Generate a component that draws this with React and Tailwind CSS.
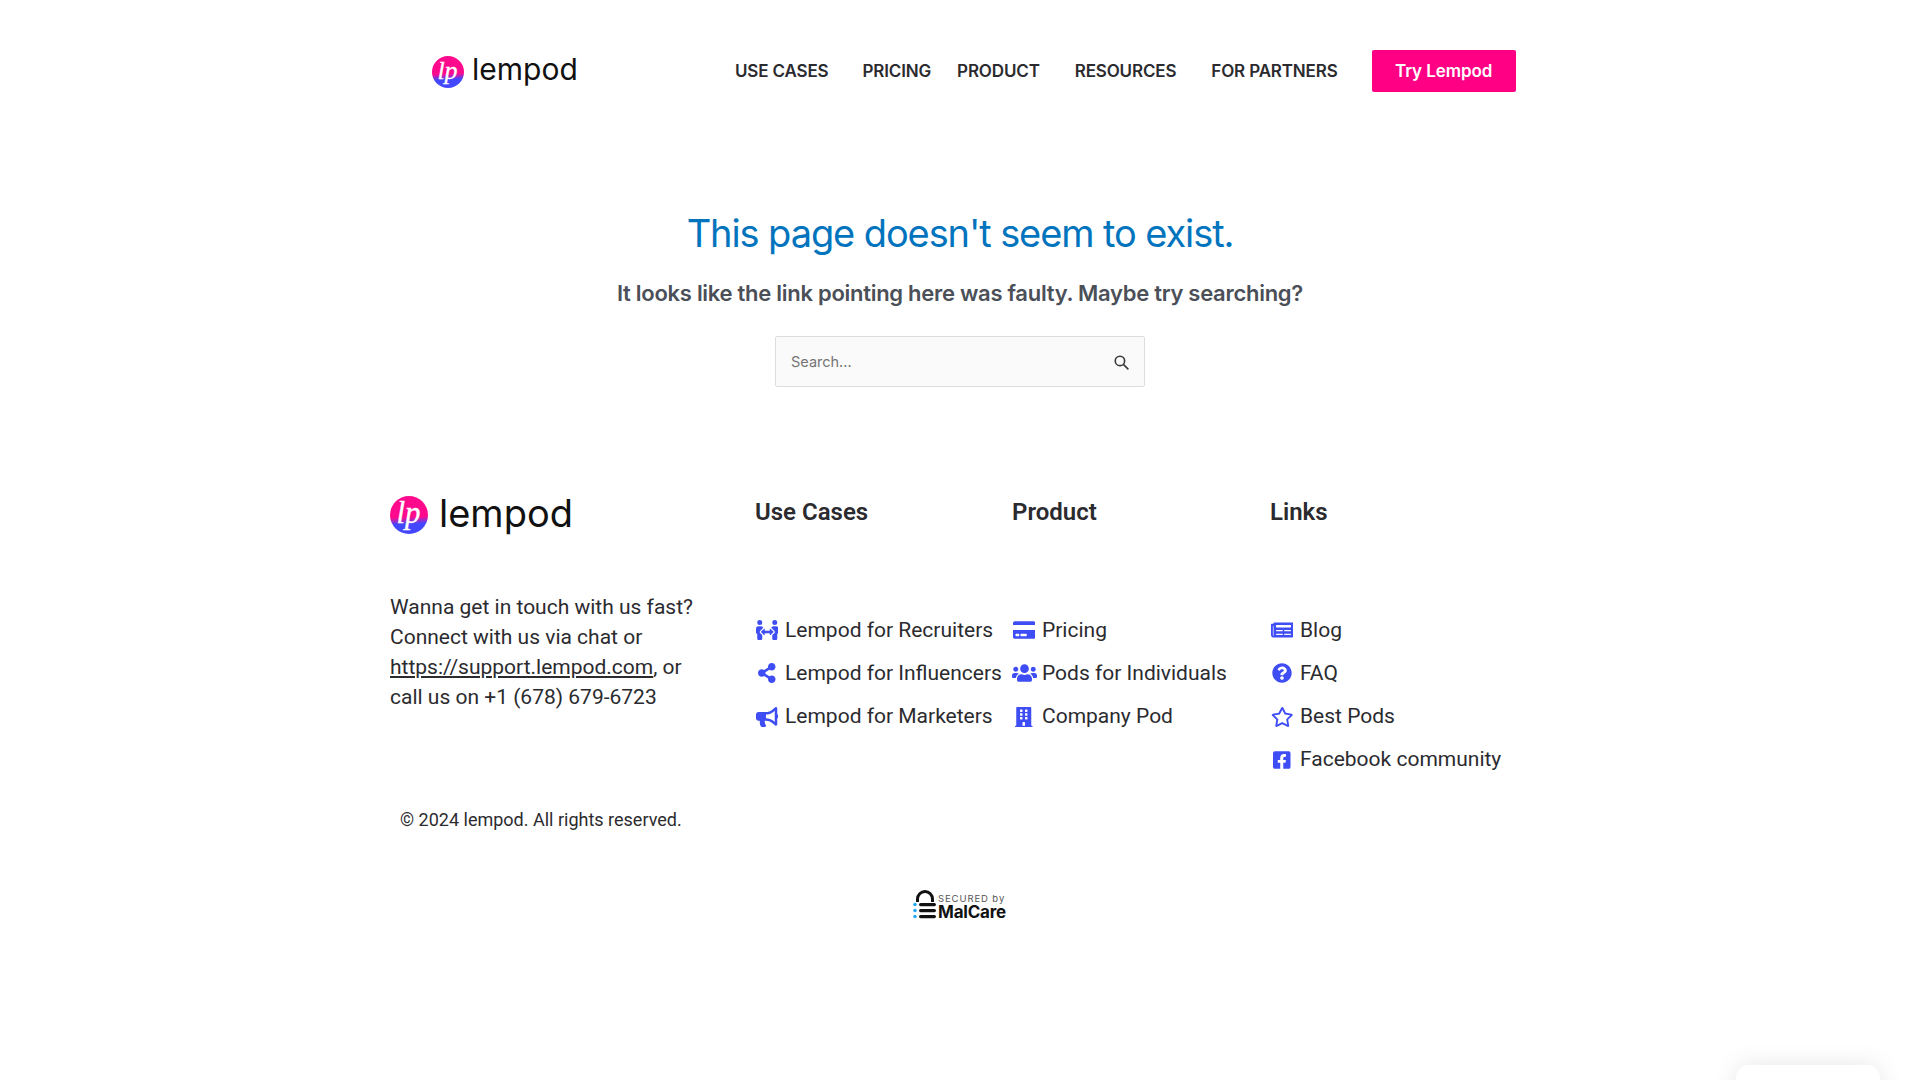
import React from "react";
import {
  FaPeopleArrows, FaShareAlt, FaBullhorn, FaCreditCard, FaUsers, FaBuilding,
  FaNewspaper, FaQuestionCircle, FaRegStar, FaFacebookSquare,
} from "react-icons/fa";

const navLinks = [
  { label: "USE CASES", className: "mr-[34px]" },
  { label: "PRICING", className: "mr-[26px]" },
  { label: "PRODUCT", className: "mr-[35px]" },
  { label: "RESOURCES", className: "mr-[35px]" },
  { label: "FOR PARTNERS", className: "mr-[34px]" },
];

const footerColumns = [
  {
    title: "Use Cases",
    width: "w-[257px]",
    items: [
      { icon: FaPeopleArrows, size: "w-[22.5px]", label: "Lempod for Recruiters" },
      { icon: FaShareAlt, size: "w-[17.5px]", label: "Lempod for Influencers" },
      { icon: FaBullhorn, size: "w-[22.5px]", label: "Lempod for Marketers" },
    ],
  },
  {
    title: "Product",
    width: "w-[258px]",
    items: [
      { icon: FaCreditCard, size: "w-[22.5px]", label: "Pricing" },
      { icon: FaUsers, size: "w-[25px]", label: "Pods for Individuals" },
      { icon: FaBuilding, size: "w-[17.5px]", label: "Company Pod" },
    ],
  },
  {
    title: "Links",
    width: "w-[250px]",
    items: [
      { icon: FaNewspaper, size: "w-[22.5px]", label: "Blog" },
      { icon: FaQuestionCircle, size: "w-[20px]", label: "FAQ" },
      { icon: FaRegStar, size: "w-[22.5px]", label: "Best Pods" },
      { icon: FaFacebookSquare, size: "w-[17.5px]", label: "Facebook community" },
    ],
  },
];

const LogoMark = ({ id, className }) => (
  <svg viewBox="0 0 32 32" className={className}>
    <defs>
      <linearGradient id={id} x1="0" y1="0" x2="0.05" y2="1">
        <stop offset="0.58" stopColor="#ff0a8c" />
        <stop offset="0.76" stopColor="#4348ff" />
      </linearGradient>
    </defs>
    <circle cx="16" cy="16" r="16" fill={`url(#${id})`} />
    <text x="15.5" y="23" textAnchor="middle" fontSize="26" fontStyle="italic" fill="#fff" stroke="#fff" strokeWidth="0.3" fontFamily="'Liberation Serif', serif">lp</text>
  </svg>
);

const MalCareBadge = () => (
  <div className="flex items-end w-[94px] h-[32px]">
    <svg viewBox="0 0 24 32" className="w-[24px] h-[32px] shrink-0">
      <path d="M4.5 13V10a7.5 7.5 0 0 1 15 0v3" fill="none" stroke="#111" strokeWidth="3" />
      <rect x="6" y="14" width="17" height="3.2" rx="1.6" fill="#111" />
      <rect x="6" y="20" width="17" height="3.2" rx="1.6" fill="#111" />
      <rect x="6" y="26" width="17" height="3.2" rx="1.6" fill="#111" />
      <circle cx="2" cy="15.5" r="1.7" fill="#1ea7f5" />
      <circle cx="2" cy="21.5" r="1.7" fill="#1ea7f5" />
      <circle cx="2" cy="27.5" r="1.7" fill="#1ea7f5" />
    </svg>
    <div className="ml-[1px] flex flex-col items-start">
      <span className="text-[9.5px] leading-[10px] tracking-[0.9px] text-[#555] whitespace-nowrap font-['Inter',sans-serif]">SECURED by</span>
      <span className="text-[17px] leading-[17px] font-bold text-[#111] whitespace-nowrap font-['Inter',sans-serif] tracking-[-0.2px]">MalCare</span>
    </div>
  </div>
);

const App = () => {
  return (
    <div className="relative h-[1080px] overflow-hidden bg-white font-['Roboto',sans-serif] text-[#2b2b2f]">
      {/* Header */}
      <header className="w-[1140px] mx-auto h-[141px] pt-[50px] flex items-start">
        <div className="ml-[42px] w-[303px] h-[42px] flex items-center">
          <LogoMark id="logo-top" className="w-[32px] h-[32px] mt-[1px]" />
          <span className="ml-[8px] text-[30px] leading-none text-[#111] font-['Inter',sans-serif] -mt-[4px]">lempod</span>
        </div>
        <nav className="h-[42px] flex items-center">
          {navLinks.map((link) => (
            <a key={link.label} href="#" className={`pt-[1px] text-[17px] font-semibold text-[#2b2b2f] whitespace-nowrap font-['Inter',sans-serif] tracking-[-0.15px] ${link.className}`}>
              {link.label}
            </a>
          ))}
          <a href="#" className="w-[144px] h-[42px] pt-[1px] flex items-center justify-center rounded-[2px] bg-[#ff0084] text-white text-[17px] font-semibold font-['Inter',sans-serif] tracking-[-0.1px]">
            Try Lempod
          </a>
        </nav>
      </header>

      {/* Not found */}
      <main className="flex flex-col items-center font-['Inter',sans-serif]">
        <h1 className="mt-[65px] text-[38px] leading-[54px] tracking-[-1.1px] text-[#0274be] font-normal">This page doesn't seem to exist.</h1>
        <p className="mt-[17px] text-[22px] leading-[33px] tracking-[-0.28px] font-semibold text-[#4b4f58]">It looks like the link pointing here was faulty. Maybe try searching?</p>
        <div className="mt-[26px] w-[370px] h-[51px] flex items-center justify-between pl-[15px] pr-[15px] bg-[#fafafa] border border-[#dddddd] rounded-[2px]">
          <span className="text-[14.5px] text-[#757575]">Search...</span>
          <svg viewBox="0 0 24 24" className="w-[15px] h-[15px] mt-[1px]" fill="none" stroke="#3a3a3a" strokeWidth="2.6">
            <circle cx="9.5" cy="9.5" r="7.5" />
            <path d="M15 15l8 8" />
          </svg>
        </div>
      </main>

      {/* Footer */}
      <footer className="w-[1140px] mx-auto mt-[106px]">
        <div className="flex items-start">
          <div className="w-[365px]">
            <div className="flex items-center h-[42px]">
              <LogoMark id="logo-footer" className="w-[38px] h-[38px] mt-[1px]" />
              <span className="ml-[11px] text-[38px] leading-none text-[#111] font-['Inter',sans-serif] -mt-[3px]">lempod</span>
            </div>
            <p className="mt-[57px] text-[21px] leading-[30px] text-[#2b2b2f] w-[320px]">
              Wanna get in touch with us fast? Connect with us via chat or <a href="#" className="underline">https://support.lempod.com</a>, or call us on +1 (678) 679-6723
            </p>
          </div>
          {footerColumns.map((col) => (
            <div key={col.title} className={col.width}>
              <h3 className="h-[42px] text-[24px] leading-[30px] font-semibold text-[#2b2b2f] pt-[4px]">{col.title}</h3>
              <ul className="mt-[80px] flex flex-col gap-[12.4px]">
                {col.items.map((item) => {
                  const Icon = item.icon;
                  return (
                    <li key={item.label} className="h-[30.7px] flex items-center text-[21px] text-[#2b2b2f] whitespace-nowrap">
                      <span className="w-[24px] flex justify-center shrink-0 mr-[6px]">
                        <Icon className={`text-[#3f4df5] h-[20px] shrink-0 ${item.size}`} />
                      </span>
                      {item.label}
                    </li>
                  );
                })}
              </ul>
            </div>
          ))}
        </div>
        <p className="mt-[31px] ml-[10px] text-[18px] leading-[27px] text-[#2b2b2f]">© 2024 lempod. All rights reserved.</p>
      </footer>

      <div className="flex justify-center mt-[56px]">
        <MalCareBadge />
      </div>

      {/* Chat widget peeking from the bottom edge */}
      <div className="absolute left-[1736px] top-[1065px] w-[144px] h-[60px] bg-white rounded-t-[12px] shadow-[0_0_24px_rgba(0,0,0,0.1)]" />
    </div>
  );
};

export default App;
